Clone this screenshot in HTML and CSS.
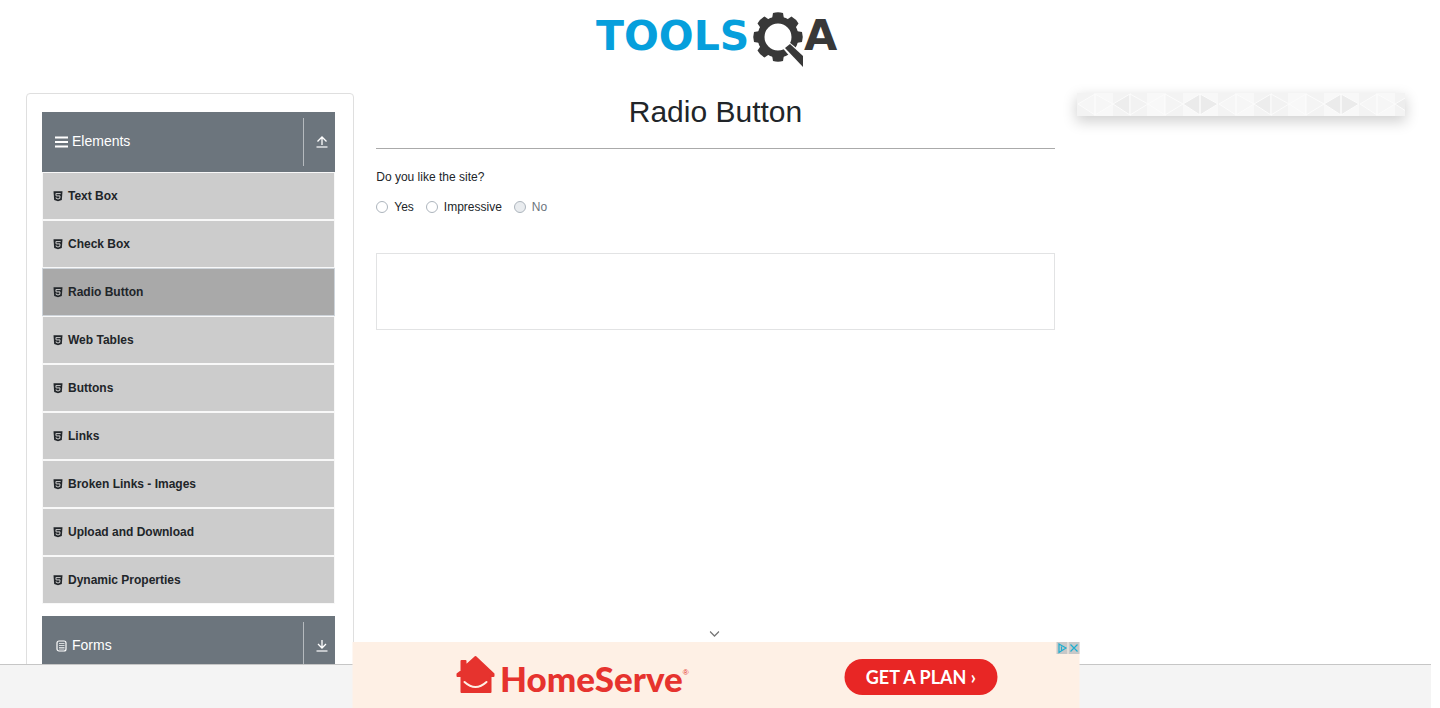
FILE: index.html
```
<!DOCTYPE html>
<html lang="en">
<head>
<meta charset="utf-8">
<title>Radio Button</title>
<link rel="stylesheet" href="styles.css">
</head>
<body>
<svg class="defs" width="0" height="0" aria-hidden="true">
  <symbol id="html5" viewBox="0 0 10 11"><path fill="#212529" d="M0.5 0.3H9.5L8.8 9L5 10.3L1.2 9Z"/><path d="M7.7 2.6H2.9L3.1 4.9H7L6.8 7.4L5 8L3.2 7.4L3.1 6.4" fill="none" stroke="#ccc" stroke-width="1"/></symbol>
  <symbol id="up" viewBox="0 0 12 12"><path d="M6 9V1M1.5 5.5L6 1L10.5 5.5" fill="none" stroke="#fff" stroke-width="1.3"/><path d="M0.5 11H11.5" stroke="#c3c7cb" stroke-width="2"/></symbol>
  <symbol id="down" viewBox="0 0 12 12"><path d="M6 0V8M2 4L6 8L10 4" fill="none" stroke="#fff" stroke-width="1.3"/><path d="M0.5 11H11.5" stroke="#c3c7cb" stroke-width="2"/></symbol>
  <symbol id="tooth" viewBox="-6 0 12 10"><path d="M-6 10L-4 0H4L6 10Z"/></symbol>
</svg>

<header class="site-header">
  <a href="#" aria-label="ToolsQA">
    <svg class="logo" width="250" height="60" viewBox="0 0 250 60">
      <text class="logo-tools" x="5" y="40">TOOLS</text>
      <circle cx="187" cy="27" r="17" fill="none" stroke="#383838" stroke-width="7"/>
      <g fill="#383838" transform="translate(187 27)">
        <path id="cog" d="M-6 -18L-5 -24Q0 -25.500 5 -24L6 -18Z"/>
        <use href="#cog" transform="rotate(45)"/>
        <use href="#cog" transform="rotate(90)"/>
        <use href="#cog" transform="rotate(180)"/>
        <use href="#cog" transform="rotate(225)"/>
        <use href="#cog" transform="rotate(270)"/>
        <use href="#cog" transform="rotate(315)"/>
      </g>
      <path d="M190 36L198 32L214 45V60H210Z" fill="#fff"/>
      <path d="M194 38L199 34L212 46V57Z" fill="#383838"/>
      <text class="logo-a" x="213" y="40">A</text>
    </svg>
  </a>
</header>

<main class="layout">
  <nav class="sidebar">
    <button class="group" type="button">
      <svg width="13" height="12" viewBox="0 0 13 12"><path d="M0 1.5H13M0 6H13M0 10.5H13" stroke="#fff" stroke-width="2"/></svg>
      <span class="group-name">Elements</span>
      <span class="group-toggle"><svg width="12" height="12"><use href="#up"/></svg></span>
    </button>
    <ul class="menu">
      <li><a href="#"><svg width="10" height="11"><use href="#html5"/></svg>Text Box</a></li>
      <li><a href="#"><svg width="10" height="11"><use href="#html5"/></svg>Check Box</a></li>
      <li><a class="active" href="#"><svg width="10" height="11"><use href="#html5"/></svg>Radio Button</a></li>
      <li><a href="#"><svg width="10" height="11"><use href="#html5"/></svg>Web Tables</a></li>
      <li><a href="#"><svg width="10" height="11"><use href="#html5"/></svg>Buttons</a></li>
      <li><a href="#"><svg width="10" height="11"><use href="#html5"/></svg>Links</a></li>
      <li><a href="#"><svg width="10" height="11"><use href="#html5"/></svg>Broken Links - Images</a></li>
      <li><a href="#"><svg width="10" height="11"><use href="#html5"/></svg>Upload and Download</a></li>
      <li><a href="#"><svg width="10" height="11"><use href="#html5"/></svg>Dynamic Properties</a></li>
    </ul>
    <button class="group" type="button">
      <svg width="13" height="12" viewBox="0 0 13 12"><rect x="2" y="1" width="9" height="10" rx="2" fill="none" stroke="#fff" stroke-width="1.2"/><path d="M4 3.5H9.5M4 5.5H9.5M4 7.5H9.5M4 9H9.5" stroke="#d5d8da" stroke-width="1"/></svg>
      <span class="group-name">Forms</span>
      <span class="group-toggle"><svg width="12" height="12"><use href="#down"/></svg></span>
    </button>
  </nav>

  <section class="content">
    <h1>Radio Button</h1>
    <fieldset class="question">
      <legend>Do you like the site?</legend>
      <div class="options">
        <label><input type="radio" name="like">Yes</label>
        <label><input type="radio" name="like">Impressive</label>
        <label class="disabled"><input type="radio" name="like" disabled>No</label>
      </div>
    </fieldset>
    <div class="output"></div>
  </section>

  <aside class="side">
    <svg class="pattern" width="100%" height="23">
      <defs>
        <pattern id="tri" width="141" height="23" patternUnits="userSpaceOnUse">
          <rect width="141" height="23" fill="#f8f8f8"/>
          <path fill="#f3f3f3" d="M0 0H17V23H0ZM36 0H53V23H36ZM54 0H70V23H54ZM89 0H106V23H89Z"/>
          <path fill="#f6f6f6" stroke="#fcfcfc" d="M1 11L18 1V22ZM18 1L36 11L18 22Z"/>
          <path fill="#ededed" stroke="#fcfcfc" d="M36 11L53 1V22Z"/>
          <path fill="#f2f2f2" stroke="#fcfcfc" d="M53 1L71 11L53 22Z"/>
          <path fill="#f8f8f8" stroke="#fcfcfc" d="M71 11L88 1V22Z"/>
          <path fill="#f4f4f4" stroke="#fcfcfc" d="M88 1L106 11L88 22Z"/>
          <path fill="#ebebeb" stroke="#fcfcfc" d="M106 11L123 1V22ZM123 1L141 11L123 22Z"/>
        </pattern>
      </defs>
      <rect width="100%" height="23" fill="url(#tri)"/>
    </svg>
  </aside>
</main>

<footer class="footer">
  <div class="ad">
    <button class="collapse" type="button" aria-label="Collapse"><svg width="10" height="6" viewBox="0 0 10 6"><path d="M0.5 0.5L5 5L9.5 0.5" fill="none" stroke="#777" stroke-width="1.3"/></svg></button>
    <a class="brand" href="#">
      <svg width="40" height="40" viewBox="0 0 40 40">
        <path fill="#e6332e" stroke="#e6332e" stroke-width="2" stroke-linejoin="round" d="M6 16V6H10V11L20 2L38 19V21H35V37H6V21H2V19Z"/>
        <path d="M9 27Q20 37 31 27" fill="none" stroke="#fef0e5" stroke-width="2" stroke-linecap="round"/>
      </svg>
      <span class="brand-name">HomeServe</span><span class="reg">®</span>
    </a>
    <a class="cta" href="#">GET A PLAN ›</a>
    <div class="ad-controls">
      <button type="button" aria-label="Ad choices"><svg width="11" height="12" viewBox="0 0 11 12"><path d="M2.5 2L9.5 6L2.5 10.5ZM5 4.5V8.5" fill="none" stroke="#1eaed0" stroke-width="1.2"/></svg></button>
      <button type="button" aria-label="Close ad"><svg width="11" height="12" viewBox="0 0 11 12"><path d="M2 2.5L9 9.5M9 2.5L2 9.5" stroke="#1eaed0" stroke-width="1.2"/></svg></button>
    </div>
  </div>
</footer>
</body>
</html>
```
FILE: styles.css
```
* { box-sizing: border-box; }
body {
  margin: 0;
  padding-right: 9px;
  height: 100vh;
  overflow: hidden;
  display: flex;
  flex-direction: column;
  background: #fff;
  color: #212529;
  font: 12px/18px "Liberation Sans", Arial, sans-serif;
}
a { color: inherit; text-decoration: none; }
button { font: inherit; border: 0; padding: 0; background: none; cursor: pointer; }
svg { display: block; flex: none; }
.defs { position: absolute; }

.site-header {
  display: flex;
  justify-content: center;
  padding-top: 10px;
}
.logo text { font-family: "DejaVu Sans", sans-serif; font-weight: bold; }
.logo-tools { font-size: 41px; fill: #069fdc; }
.logo-a { font-size: 43px; fill: #383838; }

.layout {
  flex: 1;
  min-height: 0;
  overflow: hidden;
  display: grid;
  grid-template-columns: repeat(4, 1fr);
  align-items: start;
  gap: 22px;
  padding: 23px 26px 0;
}
.sidebar {
  border: 1px solid #dfdfdf;
  border-radius: 4px;
  padding: 18px 18px 18px 15px;
}
.group {
  display: flex;
  align-items: center;
  gap: 4px;
  width: 100%;
  height: 60px;
  padding-left: 13px;
  background: #6c757d;
  color: #fff;
  font-size: 14px;
}
.group-name { flex: 1; text-align: left; padding-bottom: 2px; }
.group-toggle {
  display: flex;
  align-items: center;
  height: 48px;
  padding: 0 7px 0 12px;
  border-left: 1px solid #b5babe;
}
.menu { list-style: none; margin: 0 0 12px; padding: 0; }
.menu a {
  display: flex;
  align-items: center;
  gap: 5px;
  height: 48px;
  padding-left: 10px;
  border: 1px solid #f8f8f8;
  background: #ccc;
  font-weight: bold;
}
.menu .active { background: #a9a9a9; border-color: #ced4da; }

.content { grid-column: span 2; }
h1 {
  margin: 0 0 19px;
  padding-bottom: 18px;
  border-bottom: 1px solid #aaa;
  font-size: 30px;
  font-weight: normal;
  line-height: 37px;
  text-align: center;
}
.question { margin: 0 0 37px; padding: 0; border: 0; min-width: 0; }
.question legend { padding: 0; margin-bottom: 12px; }
.options { display: flex; gap: 12px; }
.options label { display: flex; align-items: center; gap: 6px; }
.options input {
  appearance: none;
  width: 12px;
  height: 12px;
  margin: 0;
  border: 1px solid #adb5bd;
  border-radius: 50%;
  background: #fff;
}
.options input:checked { border: 4px solid #007bff; }
.options input:disabled { background: #e9ecef; }
.options .disabled { color: #6c757d; }
.output { height: 77px; border: 1px solid #e2e3e4; }

.side { box-shadow: 0 5px 14px 1px rgba(0, 0, 0, 0.18); }

.footer {
  position: relative;
  flex: none;
  height: 44px;
  border-top: 1px solid #c6c6c6;
  background: #f4f4f4;
}
.ad {
  position: absolute;
  bottom: 0;
  left: 50%;
  width: 727px;
  height: 66px;
  transform: translateX(-50%);
  display: flex;
  align-items: center;
  justify-content: space-between;
  padding: 4px 82px 0 103px;
  background: #fef0e5;
}
.brand { display: flex; align-items: center; gap: 5px; padding-bottom: 4px; color: #e6332e; }
.brand-name { padding-top: 6px; font: 900 35px/40px Lato, sans-serif; }
.reg { font-size: 8px; margin-left: -5px; padding-bottom: 4px; }
.cta {
  padding: 0 21px;
  border-radius: 18px;
  background: #e82625;
  color: #fff;
  font: 700 18px/36px Lato, sans-serif;
}
.ad-controls { position: absolute; top: 0; right: 0; display: flex; gap: 1px; }
.ad-controls button { background: #c8c8c8; }
.collapse { position: absolute; top: -11px; left: 357px; }
```
